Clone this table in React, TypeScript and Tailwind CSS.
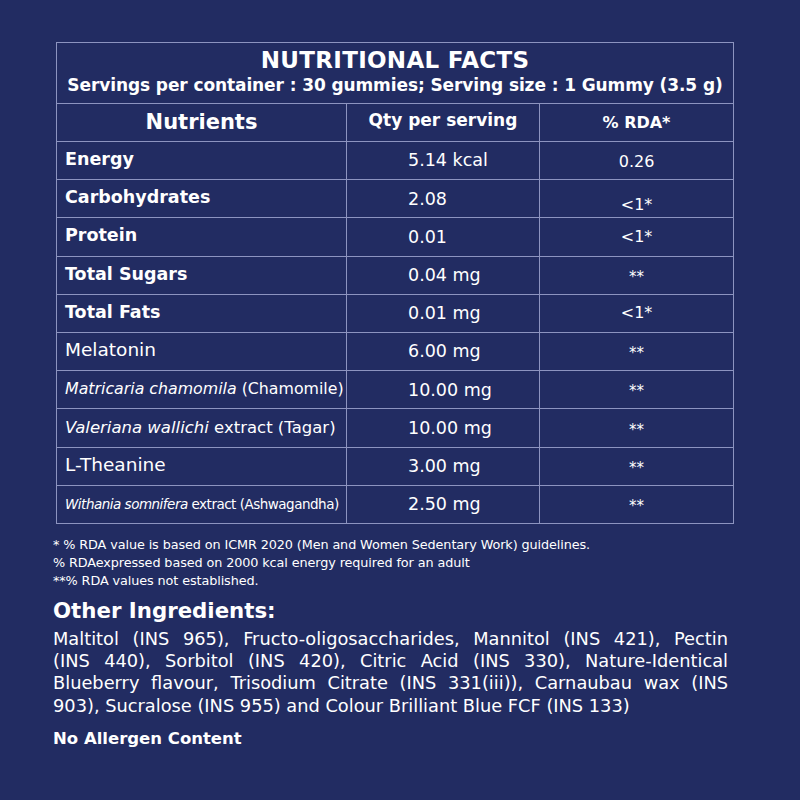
import React from "react";

type Row = { name: React.ReactNode; qty: string; rda: string; bold?: boolean; rdaPad?: string };

const rows: Row[] = [
  { name: "Energy", qty: "5.14 kcal", rda: "0.26", bold: true, rdaPad: "pt-[2px]" },
  { name: "Carbohydrates", qty: "2.08", rda: "<1*", bold: true, rdaPad: "pt-[12px]" },
  { name: "Protein", qty: "0.01", rda: "<1*", bold: true },
  { name: "Total Sugars", qty: "0.04 mg", rda: "**", bold: true },
  { name: "Total Fats", qty: "0.01 mg", rda: "<1*", bold: true },
  { name: "Melatonin", qty: "6.00 mg", rda: "**" },
  {
    name: (
      <span className="text-[15.8px]">
        <i className="font-light">Matricaria chamomila</i> (Chamomile)
      </span>
    ),
    qty: "10.00 mg",
    rda: "**",
  },
  {
    name: (
      <span className="text-[16.5px]">
        <i className="font-light">Valeriana wallichi</i> extract (Tagar)
      </span>
    ),
    qty: "10.00 mg",
    rda: "**",
  },
  { name: "L-Theanine", qty: "3.00 mg", rda: "**" },
  {
    name: (
      <span className="text-[13.5px] tracking-[-0.5px]">
        <i className="font-light">Withania somnifera</i> extract (Ashwagandha)
      </span>
    ),
    qty: "2.50 mg",
    rda: "**",
  },
];

const ingredients = [
  "Maltitol (INS 965), Fructo-oligosaccharides, Mannitol (INS 421), Pectin",
  "(INS 440), Sorbitol (INS 420), Citric Acid (INS 330), Nature-Identical",
  "Blueberry flavour, Trisodium Citrate (INS 331(iii)), Carnaubau wax (INS",
];

export default function App() {
  return (
    <div
      className="w-[800px] h-[800px] bg-[#222c62] text-white overflow-hidden"
      style={{ fontFamily: '"DejaVu Sans", "Open Sans", sans-serif' }}
    >
      <div className="pt-[42px] pl-[56px]">
        <table className="w-[677px] border-collapse table-fixed">
          <colgroup>
            <col className="w-[290px]" />
            <col className="w-[193px]" />
            <col className="w-[194px]" />
          </colgroup>
          <thead>
            <tr className="h-[61px]">
              <th colSpan={3} className="border border-[#8d94c0] text-center font-bold leading-none">
                <div className="text-[23px] tracking-[0.3px] -mt-[3px]">NUTRITIONAL FACTS</div>
                <div className="text-[17px] font-bold mt-[5px] tracking-[-0.1px]">
                  Servings per container : 30 gummies; Serving size : 1 Gummy (3.5 g)
                </div>
              </th>
            </tr>
            <tr className="h-[38px]">
              <th className="border border-[#8d94c0] text-[21px] font-bold">Nutrients</th>
              <th className="border border-[#8d94c0] text-[17px] font-bold pb-[4px]">Qty per serving</th>
              <th className="border border-[#8d94c0] text-[16px] font-bold">% RDA*</th>
            </tr>
          </thead>
          <tbody>
            {rows.map((r, i) => (
              <tr key={i} className="h-[38.2px]">
                <td
                  className={`border border-[#8d94c0] pl-[8px] pb-[3px] whitespace-nowrap ${
                    r.bold ? "font-bold text-[17.5px]" : "font-normal text-[18.5px]"
                  }`}
                >
                  {r.name}
                </td>
                <td className="border border-[#8d94c0] pl-[61px] text-[17.5px]">{r.qty}</td>
                <td
                  className={`border border-[#8d94c0] text-center ${
                    r.rda === "**" ? "text-[15px] pt-[4px]" : "text-[16px]"
                  } ${r.rdaPad ?? ""}`}
                >
                  {r.rda}
                </td>
              </tr>
            ))}
          </tbody>
        </table>
      </div>

      <div className="pl-[53px] pr-[72px]">
        <div className="mt-[12px] text-[12.8px] leading-[18px] tracking-[-0.1px]">
          <p>* % RDA value is based on ICMR 2020 (Men and Women Sedentary Work) guidelines.</p>
          <p>% RDAexpressed based on 2000 kcal energy required for an adult</p>
          <p>**% RDA values not established.</p>
        </div>
        <h2 className="mt-[7px] text-[21.3px] font-bold leading-[28px]">Other Ingredients:</h2>
        <div className="mt-[3px] text-[17.8px] leading-[22.3px]">
          {ingredients.map((l) => (
            <p key={l} className="text-justify [text-align-last:justify]">
              {l}
            </p>
          ))}
          <p>903), Sucralose (INS 955) and Colour Brilliant Blue FCF (INS 133)</p>
        </div>
        <p className="mt-[10px] text-[16.5px] font-bold">No Allergen Content</p>
      </div>
    </div>
  );
}
